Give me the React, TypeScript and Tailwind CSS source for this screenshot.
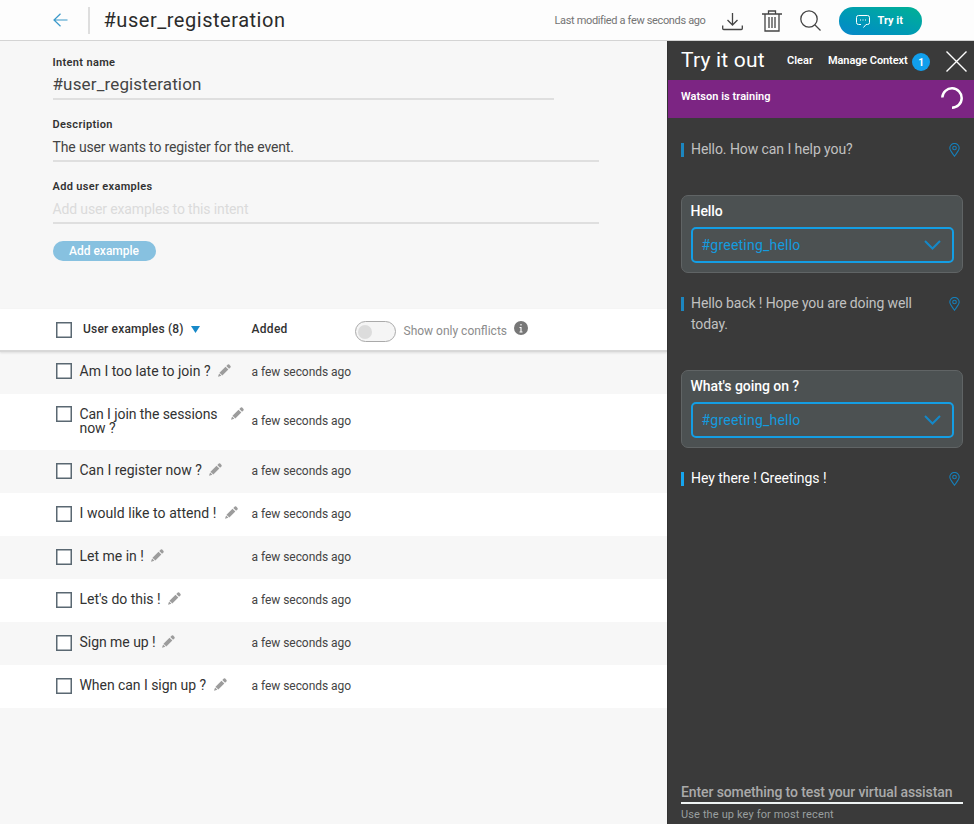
import React from "react";

const examples = [
  { text: "Am I too late to join ?", track: "tracking-[0px]", gap: "w-[138.5px]" },
  { text: "Can I join the sessions now ?", track: "tracking-[-0.08px]", gap: "w-[151.5px]", tall: true },
  { text: "Can I register now ?", track: "tracking-[0px]", gap: "w-[129.5px]" },
  { text: "I would like to attend !", track: "tracking-[0.05px]", gap: "w-[145.5px]" },
  { text: "Let me in !", track: "tracking-[0px]", gap: "w-[71.5px]" },
  { text: "Let's do this !", track: "tracking-[-0.03px]", gap: "w-[88.5px]" },
  { text: "Sign me up !", track: "tracking-[-0.04px]", gap: "w-[82.5px]" },
  { text: "When can I sign up ?", track: "tracking-[-0.05px]", gap: "w-[134.5px]" },
];

function Checkbox() {
  return <span className="block size-4 shrink-0 border-[1.5px] border-[#5a6872] bg-white shadow-[inset_0_0_0_0.5px_#5a6872]" />;
}

function Pencil() {
  return (
    <svg className="block shrink-0" width="13" height="13" viewBox="0 0 13 13" fill="#9c9c9c">
      <path d="M0 12.800 1.100 9.600 3.400 11.700Z" />
      <path d="M1.500 8.800 7.500 2.800 10.300 5.600 4.300 11.500Z" />
      <path d="M8.300 2 9.800.5Q10.500 0 11.200.6L12.500 1.900Q13 2.500 12.500 3.200L11.100 4.700Z" />
    </svg>
  );
}

function Pin() {
  return (
    <svg className="block shrink-0" width="11" height="14" viewBox="0 0 11 14" fill="none" stroke="#167fb9" strokeWidth="1.1">
      <path d="M5.5 13.2C3.5 10.2.8 7.5.8 5.1a4.7 4.7 0 0 1 9.4 0c0 2.4-2.7 5.1-4.7 8.1Z" />
      <circle cx="5.5" cy="5" r="1.8" />
    </svg>
  );
}

function Message({ children, bright = false }: { children: React.ReactNode; bright?: boolean }) {
  return (
    <div className="flex items-start">
      <span className={`mt-[4px] h-[14px] w-[3px] ${bright ? "bg-[#16a5ee]" : "bg-[#1c86bf]"}`} />
      <div className={`ml-[7px] w-[245px] text-[14px] leading-[21px] ${bright ? "text-white" : "text-[#c1c1c1]"}`}>{children}</div>
      <div className="ml-[13px] mt-1"><Pin /></div>
    </div>
  );
}

function UserMessage({ title }: { title: string }) {
  return (
    <div className="h-[78px] w-[282px] rounded-[7px] border border-[#606465] bg-[#4c5152] px-[8.5px] pt-[5px]">
      <div className="h-[20px] whitespace-nowrap text-[14px] font-medium leading-[21px] tracking-[-0.05px] text-white">{title}</div>
      <div className="mt-[6px] flex h-9 w-[263px] items-center justify-between rounded-[5px] border-2 border-[#149ee4] pl-[9px] pr-[11px]">
        <span className="text-[14px] tracking-[0.22px] text-[#149bdf]">#greeting_hello</span>
        <svg width="17" height="10" viewBox="0 0 17 10" fill="none" stroke="#1488c8" strokeWidth="2"><path d="M1 1 8.500 8.500 16 1" /></svg>
      </div>
    </div>
  );
}

export default function App() {
  return (
    <div className="flex h-[824px] w-[974px] flex-col overflow-hidden bg-[#f7f7f7] font-[Roboto,sans-serif] text-[#323232]">
      <header className="flex h-[41px] shrink-0 items-center border-b border-[#d4d4d4] bg-[#fdfdfd]">
        <svg className="ml-[53px]" width="15" height="14" viewBox="0 0 15 14" fill="none" stroke="#3b99ca" strokeWidth="1.2"><path d="M14.5 7H1M7.5.7 1 7l6.500 6.300" /></svg>
        <span className="ml-5 h-[27px] w-[1.5px] bg-[#dedede]" />
        <h1 className="ml-[14px] w-[451px] whitespace-nowrap text-[20px] tracking-[0.53px] text-[#2b2b2b]">#user_registeration</h1>
        <span className="mt-[2px] w-[167px] whitespace-nowrap text-[11px] tracking-[-0.35px] text-[#747474]">Last modified a few seconds ago</span>
        <svg width="21" height="18" viewBox="0 0 21 18" className="mt-[3px]" fill="none" stroke="#444" strokeWidth="1.3"><path d="M10.500 0v12M5.500 7l5 5 5-5M.7 12.500v3q0 1 1 1h17.600q1 0 1-1v-3" /></svg>
        <svg width="20" height="22" viewBox="0 0 20 22" className="ml-[19px] mt-[2px]" fill="none" stroke="#444" strokeWidth="1.3"><path d="M0 4h20M6.500 4V1h7v3M3 4v17h14V4M7 7v11M10 7v11M13 7v11" /></svg>
        <svg width="21" height="21" viewBox="0 0 21 21" className="ml-[18px] mt-px" fill="none" stroke="#444" strokeWidth="1.3"><circle cx="9" cy="9" r="8.200" /><path d="m15 15 5.500 5.500" /></svg>
        <div className="ml-[18px] mt-[2px] flex h-7 w-[83px] items-center rounded-full bg-linear-to-tr from-[#0d86cb] to-[#00b193] pl-[17px] text-white">
          <svg width="14" height="13" viewBox="0 0 14 13" fill="none" stroke="currentColor" strokeWidth="1"><path d="M5 9.500H2.500a2 2 0 0 1-2-2v-5a2 2 0 0 1 2-2h9a2 2 0 0 1 2 2v5a2 2 0 0 1-2 2H10L7.500 12.500" /><path d="M4 5h1M6.500 5h1M9 5h1" /></svg>
          <span className="ml-[8px] text-[11px] font-bold">Try it</span>
        </div>
      </header>

      <div className="flex min-h-0 flex-1">
        <main className="w-[667px] shrink-0 pt-[14px]">
          <section className="ml-[52.5px] h-[254px]">
            <div className="w-[501px]">
              <div className="h-4 text-[11px] font-semibold leading-4 tracking-[0.35px]">Intent name</div>
              <div className="h-[29px] border-b-2 border-[#dfdfdf] text-[17px] leading-[27px] tracking-[0.15px] text-[#444]">#user_registeration</div>
            </div>
            <div className="mt-[17px] w-[546px]">
              <div className="h-4 text-[11px] font-semibold leading-4 tracking-[0.35px]">Description</div>
              <div className="h-[29px] border-b-2 border-[#dfdfdf] text-[14px] leading-[28px] tracking-[-0.14px] text-[#444]">The user wants to register for the event.</div>
            </div>
            <div className="mt-[17px] w-[546px]">
              <div className="h-4 text-[11px] font-semibold leading-4 tracking-[0.33px]">Add user examples</div>
              <div className="h-[29px] border-b-2 border-[#dfdfdf] text-[14px] leading-[28px] tracking-[-0.14px] text-[#dbdbdb]">Add user examples to this intent</div>
            </div>
            <div className="mt-[17px] flex h-5 w-[103px] items-center justify-center rounded-full bg-[#87c1e0] text-[12px] font-medium text-white">Add example</div>
          </section>

          <section>
            <div className="relative flex h-[43px] items-start border-b-2 border-[#d8d8d8] bg-white pl-[55.5px] shadow-[0_1px_2px_#ddd]">
              <div className="mt-[13px]"><Checkbox /></div>
              <span className="ml-[11.5px] mt-[10px] w-[107.5px] whitespace-nowrap text-[12px] font-medium leading-[20px] tracking-[0.18px]">User examples (8)</span>
              <svg className="mt-[17px]" width="9" height="7" viewBox="0 0 9 7" fill="#1789c8"><path d="M0 0h9L4.500 7Z" /></svg>
              <span className="ml-[52px] mt-[10px] w-[103px] text-[12px] font-medium leading-[20px] tracking-[0.3px]">Added</span>
              <span className="mt-[12px] flex h-[21px] w-[41px] items-center rounded-full border border-[#aaa] bg-[#f5f5f5] pl-[2px]"><i className="size-[14px] rounded-full bg-[#dcdcdc]" /></span>
              <span className="ml-2 mt-[12px] w-[110px] whitespace-nowrap text-[12px] leading-[20px] text-[#8c8c8c]">Show only conflicts</span>
              <svg className="mt-[12px]" width="14" height="14" viewBox="0 0 14 14"><circle cx="7" cy="7" r="7" fill="#777" /><path d="M7 6v5M7 3v1.500M5.500 6.500H7M5.500 11h3" stroke="white" strokeWidth="1.100" /></svg>
            </div>
            {examples.map((item, index) => (
              <div key={item.text} className={`flex items-start pl-[55.5px] ${item.tall ? "h-[56px] pt-[12px]" : index === 0 ? "h-[42px] pt-[11px]" : "h-[43px] pt-[13px]"} ${index % 2 ? "bg-white" : "bg-[#f7f7f7]"}`}>
                <Checkbox />
                <div className={`ml-2 flex w-[172px] items-start ${index < 2 ? "mt-px" : ""}`}>
                  <span className={`shrink-0 text-[14px] leading-[14px] ${item.gap} ${item.track}`}>{item.text}</span>
                  <Pencil />
                </div>
                <span className={`whitespace-nowrap text-[12px] leading-4 tracking-[-0.04px] text-[#444] ${item.tall ? "mt-[7px]" : index === 0 ? "mt-px" : ""}`}>a few seconds ago</span>
              </div>
            ))}
          </section>
        </main>

        <aside className="relative flex min-w-0 flex-1 flex-col border-l border-[#333] bg-[#3a3a3a]">
          <div className="flex h-[39px] shrink-0 items-center pl-[13px] text-white">
            <h2 className="w-[106px] whitespace-nowrap text-[21px] tracking-[0.2px]">Try it out</h2>
            <span className="mt-px w-[41px] text-[11px] font-semibold">Clear</span>
            <span className="mt-px w-[84px] whitespace-nowrap text-[11px] font-semibold tracking-[-0.1px]">Manage Context</span>
            <span className="mt-[3px] flex size-[18px] items-center justify-center rounded-full bg-[#119fed] text-[10px] font-bold">1</span>
            <svg className="ml-4 mt-px" width="21" height="21" viewBox="0 0 21 21" stroke="white" strokeWidth="1.400"><path d="M.5.5l20 20M20.500.5l-20 20" /></svg>
          </div>
          <div className="flex h-[38px] shrink-0 items-center justify-between bg-[#7c2583] pl-[13px] pr-[11px] text-white">
            <span className="-mt-[3px] text-[11px] font-semibold tracking-[0.05px]">Watson is training</span>
            <svg className="-mt-[3px]" width="22" height="22" viewBox="0 0 22 22" fill="none" stroke="white" strokeWidth="2.500"><path d="M1.300 10.500A9.700 9.700 0 1 1 11 20.700" /></svg>
          </div>
          <div className="flex flex-1 flex-col pl-[13px] pt-[21px]">
            <Message><span className="tracking-[-0.07px]">Hello. How can I help you?</span></Message>
            <div className="mt-[35px]"><UserMessage title="Hello" /></div>
            <div className="mt-[20px]"><Message><span className="tracking-[-0.11px]">Hello back ! Hope you are doing well<br />today.</span></Message></div>
            <div className="mt-[35px]"><UserMessage title="What's going on ?" /></div>
            <div className="mt-[20px]"><Message bright><span className="tracking-[-0.05px]">Hey there ! Greetings !</span></Message></div>
            <div className="mt-auto w-[282px] text-[#aaa]">
              <div className="h-[24px] border-b-2 border-[#eef3f3] text-[14px] font-medium leading-[24px] tracking-[-0.11px] whitespace-nowrap">Enter something to test your virtual assistan</div>
              <div className="h-5 text-[11px] leading-[22px] tracking-[0.13px] text-[#999f9f]">Use the up key for most recent</div>
            </div>
          </div>
        </aside>
      </div>
    </div>
  );
}
